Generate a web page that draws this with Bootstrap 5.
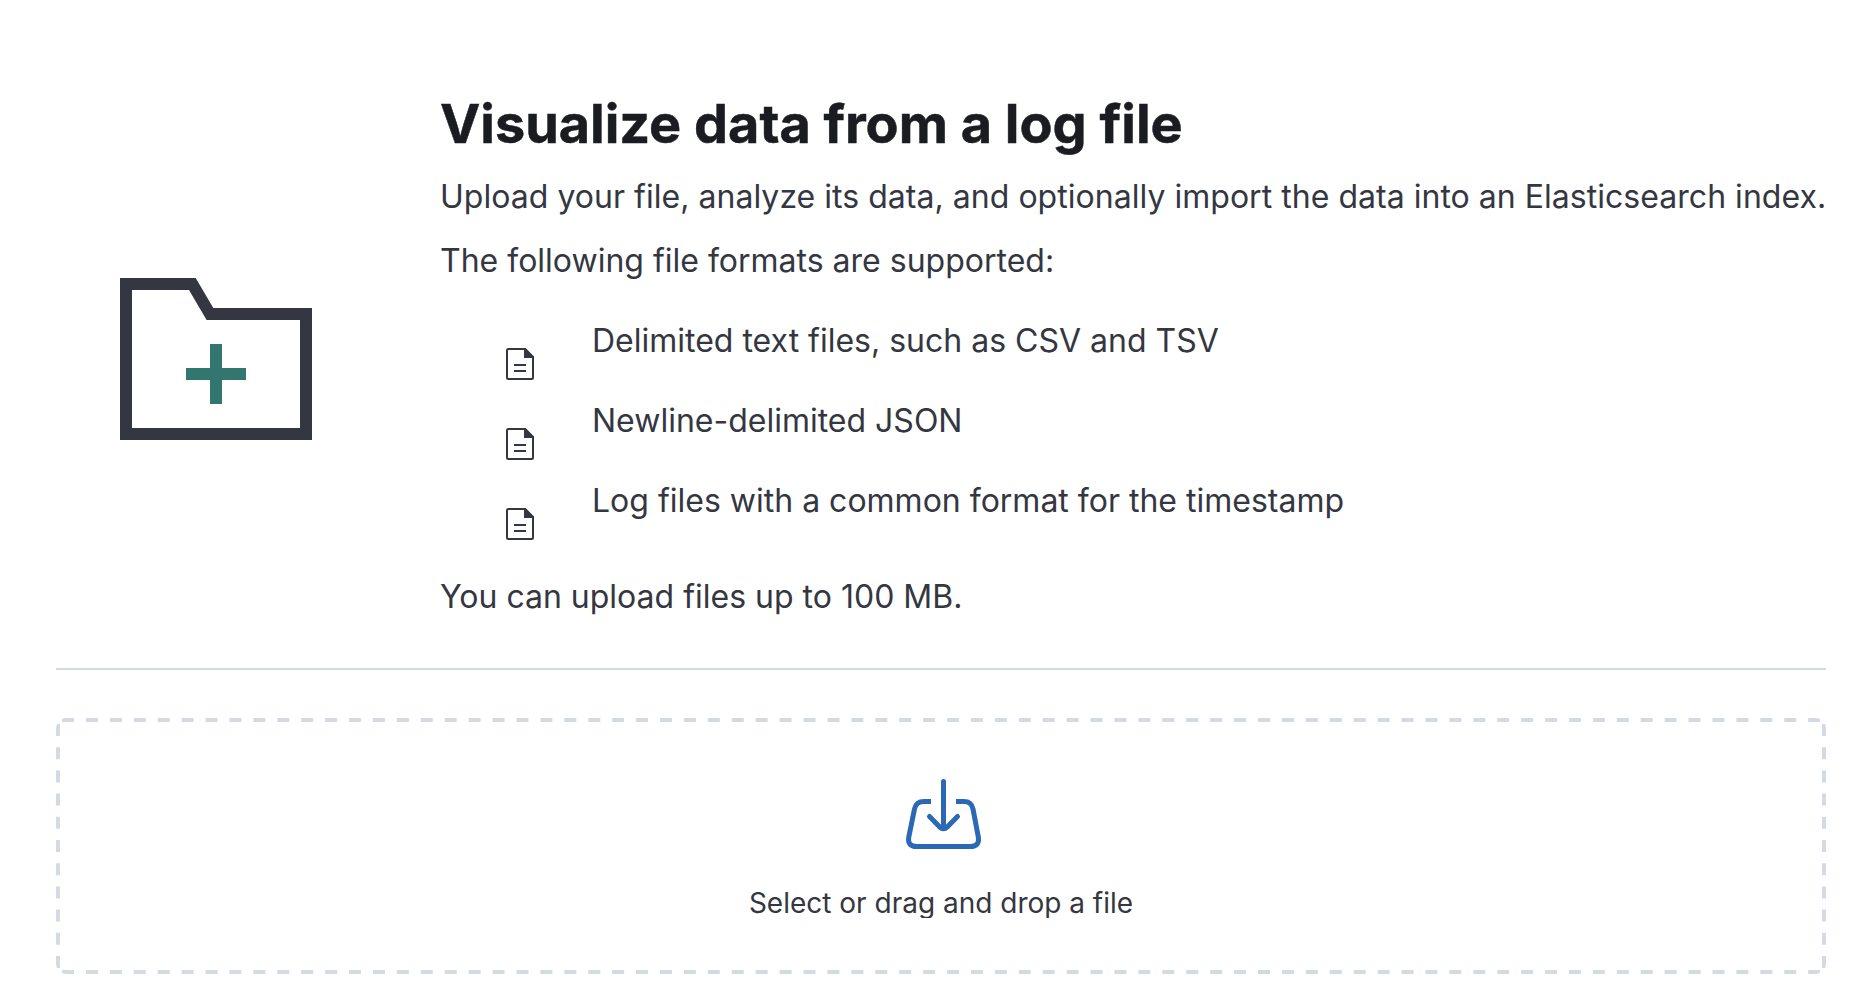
<!DOCTYPE html>
<html lang="en">
<head>
<meta charset="utf-8">
<meta name="viewport" content="width=device-width, initial-scale=1">
<title>Visualize data from a log file</title>
<link href="https://cdn.jsdelivr.net/npm/bootstrap@5.3.0/dist/css/bootstrap.min.css" rel="stylesheet">
<style>
  body { font-family: Inter, "Liberation Sans", sans-serif; color: #343741; background: #fff; font-size: 32px; line-height: 48px; overflow: hidden; }
  .page-wrap { padding: 92px 26px 0 56px; }
  .intro-icon { width: 384px; padding: 186px 0 0 64px; }
  .intro h1 { font-size: 54px; line-height: 64px; font-weight: 700; color: #1a1c21; letter-spacing: -.02px; -webkit-text-stroke: .5px #1a1c21; margin-bottom: 17px; white-space: nowrap; }
  .intro p { margin-bottom: 16px; white-space: nowrap; }
  .intro .lead-line { letter-spacing: .03px; }
  .format-list { margin: 32px 0 48px; padding-left: 64px; gap: 32px; }
  .format-list li { height: 48px; }
  .format-list svg { margin: 31px 56px 0 0; }
  .divider { height: 2px; background: #d3dae6; margin: 47px 0 48px; }
  .drop-zone { height: 256px; padding-top: 59px; }
  .drop-zone svg { overflow: visible; }
  .drop-label { font-size: 28px; line-height: 28px; height: 29px; margin-top: 36px; overflow: hidden; white-space: nowrap; }
</style>
</head>
<body>
<main class="page-wrap">
  <section class="d-flex">
    <div class="intro-icon flex-shrink-0">
      <svg class="d-block" width="192" height="162" viewBox="0 0 192 162">
        <path fill="#343741" fill-rule="evenodd" d="M0 0H75.7L93.3 30H192V162H0ZM12 12V150H180V42H86.6L69 12Z"/>
        <path fill="#32766f" d="M90 66h12v24h24v12h-24v24H90v-24H66V90h24Z"/>
      </svg>
    </div>
    <div class="intro">
      <h1>Visualize data from a log file</h1>
      <p class="lead-line">Upload your file, analyze its data, and optionally import the data into an Elasticsearch index.</p>
      <p>The following file formats are supported:</p>
      <ul class="format-list list-unstyled d-flex flex-column">
        <li class="d-flex"><svg class="flex-shrink-0" width="32" height="32"><use href="#doc"/></svg><span>Delimited text files, such as CSV and TSV</span></li>
        <li class="d-flex"><svg class="flex-shrink-0" width="32" height="32"><use href="#doc"/></svg><span>Newline-delimited JSON</span></li>
        <li class="d-flex"><svg class="flex-shrink-0" width="32" height="32"><use href="#doc"/></svg><span>Log files with a common format for the timestamp</span></li>
      </ul>
      <p class="mb-0">You can upload files up to 100 MB.</p>
    </div>
  </section>
  <div class="divider"></div>
  <section class="drop-zone position-relative d-flex flex-column align-items-center">
    <svg class="position-absolute top-0 start-0" width="1770" height="256" fill="none" stroke="#d3dae6" stroke-width="4">
      <clipPath id="frame"><rect width="1770" height="256" rx="10"/></clipPath>
      <g clip-path="url(#frame)">
        <path stroke-dasharray="12 11.92" d="M6 2H1764M6 254H1764"/>
        <path stroke-dasharray="12 11.2" d="M2 6V250M1768 6V250"/>
      </g>
    </svg>
    <svg class="flex-shrink-0" width="80" height="76" fill="none" stroke="#2b69b5" stroke-width="5">
      <path d="M30 24.500H23Q15 24.500 13.500 32L7.700 60.500Q6.500 69.500 15.500 69.500H69.500Q78.500 69.500 77.400 60.500L72 32Q70.500 24.500 63 24.500H55"/>
      <path stroke-linecap="round" stroke-linejoin="round" d="M42.500 4.500V51M28.500 39.500L38.500 49.800Q42.500 53.500 46.500 49.800L56.500 39.500"/>
    </svg>
    <div class="drop-label">Select or drag and drop a file</div>
  </section>
</main>
<svg width="0" height="0" class="position-absolute">
  <symbol id="doc" viewBox="0 0 32 32">
    <path fill="none" stroke="#343741" stroke-width="2" stroke-linejoin="round" d="M21 1L29 9.500V29.500Q29 31 27.500 31H4.500Q3 31 3 29.500V2.500Q3 1 4.500 1Z"/>
    <path fill="#343741" d="M20 0h1.500L30 8.500V10H20ZM10 16h12v2H10ZM10 22h12v2H10Z"/>
  </symbol>
</svg>
<script src="https://cdn.jsdelivr.net/npm/bootstrap@5.3.0/dist/js/bootstrap.bundle.min.js"></script>
</body>
</html>
